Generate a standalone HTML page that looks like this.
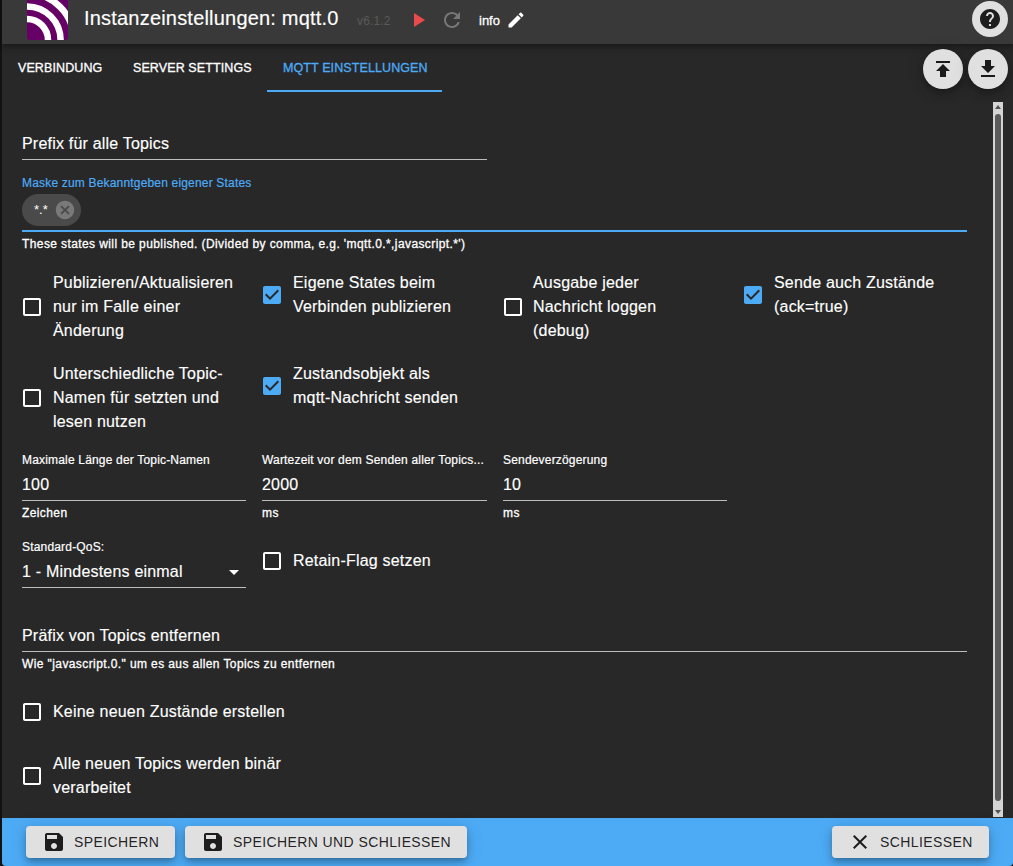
<!DOCTYPE html>
<html><head><meta charset="utf-8">
<style>
*{box-sizing:border-box;margin:0;padding:0}
html,body{width:1013px;height:866px;overflow:hidden;background:#121212;font-family:"Liberation Sans",sans-serif;color:#fff}
.a{position:absolute}
.t{position:absolute;white-space:nowrap;line-height:1}
#main{position:absolute;left:2px;top:0;width:1011px;height:866px;background:#282828;border-radius:0 0 4px 4px}
#hdr{position:absolute;left:2px;top:0;width:1011px;height:44px;background:#393939;box-shadow:0 2px 4px -1px rgba(0,0,0,.2),0 4px 5px 0 rgba(0,0,0,.14),0 1px 10px 0 rgba(0,0,0,.12)}
.f16{font-size:16px;letter-spacing:.2px;-webkit-text-stroke:.15px}
.f12{font-size:12px;letter-spacing:.18px;-webkit-text-stroke:.2px}
.b{font-weight:400;letter-spacing:.4px;-webkit-text-stroke:.3px}
.ul{position:absolute;height:1px;background:#bdbdbd}
.cb{position:absolute;width:24px;height:24px}
.tab{font-size:12.5px;font-weight:400;letter-spacing:.1px;-webkit-text-stroke:.3px}
.fab{position:absolute;width:40px;height:40px;border-radius:50%;background:#e0e0e0;box-shadow:0 3px 5px -1px rgba(0,0,0,.2),0 6px 10px 0 rgba(0,0,0,.14),0 1px 18px 0 rgba(0,0,0,.12)}
.btn{position:absolute;top:826px;height:32px;border-radius:4px;background:#e0e0e0;box-shadow:0 3px 5px -1px rgba(0,0,0,.2),0 6px 10px 0 rgba(0,0,0,.14),0 1px 18px 0 rgba(0,0,0,.12);color:rgba(0,0,0,.87)}
.btn svg{position:absolute;left:16px;top:4px;width:24px;height:24px}
.btn span{position:absolute;left:48px;top:9px;font-size:14px;line-height:14px;letter-spacing:.4px;white-space:nowrap}
</style></head><body>
<div id="main"></div>
<div id="hdr"></div>
<!-- logo -->
<svg class="a" style="left:27px;top:-1px" width="41" height="41" viewBox="0 0 41 41">
<defs><clipPath id="lc"><rect x="0" y="-5" width="41" height="46" rx="3"/></clipPath></defs>
<g clip-path="url(#lc)">
<rect x="0" y="-5" width="41" height="46" fill="#660066"/>
<g fill="none" stroke="#fff" stroke-width="6.5">
<circle cx="0" cy="41" r="21"/>
<circle cx="0" cy="41" r="33.6"/>
<circle cx="0" cy="41" r="46.8"/>
</g></g></svg>
<div class="t" style="left:84px;top:8px;font-size:20px;letter-spacing:.2px;-webkit-text-stroke:.15px">Instanzeinstellungen: mqtt.0</div>
<div class="t" style="left:357px;top:15px;font-size:12px;letter-spacing:.15px;color:#5a5a5a">v6.1.2</div>
<svg class="a" style="left:406px;top:8px" width="24" height="24" viewBox="0 0 24 24"><path fill="#e84b4b" d="M8 5v14l11-7z"/></svg>
<svg class="a" style="left:440px;top:8px" width="24" height="24" viewBox="0 0 24 24"><path fill="#777" d="M17.65 6.35C16.2 4.9 14.21 4 12 4c-4.42 0-7.99 3.58-7.99 8s3.57 8 7.99 8c3.73 0 6.84-2.55 7.73-6h-2.08c-.82 2.33-3.04 4-5.65 4-3.31 0-6-2.69-6-6s2.69-6 6-6c1.66 0 3.14.69 4.22 1.78L13 11h7V4l-2.35 2.35z"/></svg>
<div class="t" style="left:479px;top:14px;font-size:13px;letter-spacing:0;-webkit-text-stroke:.3px">info</div>
<svg class="a" style="left:506px;top:10px" width="20" height="20" viewBox="0 0 24 24"><path fill="#fff" d="M3 17.25V21h3.75L17.81 9.94l-3.75-3.75L3 17.25zM20.71 7.04c.39-.39.39-1.02 0-1.41l-2.34-2.34c-.39-.39-1.02-.39-1.41 0l-1.83 1.83 3.75 3.75 1.83-1.83z"/></svg>
<div class="a" style="left:972px;top:1px;width:36px;height:36px;border-radius:50%;background:#e0e0e0"></div>
<svg class="a" style="left:978px;top:7px" width="24" height="24" viewBox="0 0 24 24"><path fill="#1e1e1e" d="M12 2C6.48 2 2 6.48 2 12s4.48 10 10 10 10-4.48 10-10S17.52 2 12 2zm1 17h-2v-2h2v2zm2.07-7.75l-.9.92C13.45 12.9 13 13.5 13 15h-2v-.5c0-1.1.45-2.1 1.17-2.83l1.24-1.26c.37-.36.59-.86.59-1.41 0-1.1-.9-2-2-2s-2 .9-2 2H8c0-2.21 1.79-4 4-4s4 1.79 4 4c0 .88-.36 1.68-.93 2.25z"/></svg>

<!-- tabs -->
<div class="t tab" style="left:18px;top:62px">VERBINDUNG</div>
<div class="t tab" style="left:133px;top:62px">SERVER SETTINGS</div>
<div class="t tab" style="left:283px;top:62px;color:#4dabf5">MQTT EINSTELLUNGEN</div>
<div class="a" style="left:267px;top:90px;width:175px;height:2px;background:#4dabf5"></div>

<div class="fab" style="left:923px;top:49px"><svg class="a" style="left:8px;top:8px" width="24" height="24" viewBox="0 0 24 24"><path fill="#1a1a1a" d="M5 4v2h14V4H5zm0 10h4v6h6v-6h4l-7-7-7 7z"/></svg></div>
<div class="fab" style="left:968px;top:49px"><svg class="a" style="left:8px;top:8px" width="24" height="24" viewBox="0 0 24 24"><path fill="#1a1a1a" d="M19 9h-4V3H9v6H5l7 7 7-7zM5 18v2h14v-2H5z"/></svg></div>

<!-- scrollbar -->
<div class="a" style="left:993px;top:102px;width:10px;height:715px;background:#d4d4d4"></div>
<div class="a" style="left:995px;top:114px;width:6px;height:687px;border-radius:3px;background:#5a5a5a"></div>
<svg class="a" style="left:993px;top:102px" width="10" height="10" viewBox="0 0 10 10"><path fill="#505050" d="M2 7h6L5 3z"/></svg>
<svg class="a" style="left:993px;top:807px" width="10" height="10" viewBox="0 0 10 10"><path fill="#505050" d="M2 3h6L5 7z"/></svg>

<!-- content -->
<div class="t f16" style="left:22px;top:136px">Prefix für alle Topics</div>
<div class="ul" style="left:22px;top:159px;width:465px"></div>
<div class="t f12" style="left:22px;top:177px;color:#4dabf5">Maske zum Bekanntgeben eigener States</div>
<div class="a" style="left:22px;top:194px;width:59px;height:32px;border-radius:16px;background:#4a4a4a"></div>
<div class="t" style="left:34px;top:203px;font-size:13px">*.*</div>
<svg class="a" style="left:54px;top:199px" width="22" height="22" viewBox="0 0 24 24"><path fill="#797979" d="M12 2C6.47 2 2 6.47 2 12s4.47 10 10 10 10-4.47 10-10S17.53 2 12 2zm5 13.59L15.59 17 12 13.41 8.41 17 7 15.59 10.59 12 7 8.41 8.41 7 12 10.59 15.59 7 17 8.41 13.41 12 17 15.59z"/></svg>
<div class="a" style="left:22px;top:230px;width:945px;height:2px;background:#4dabf5"></div>
<div class="t f12 b" style="left:22px;top:238px">These states will be published. (Divided by comma, e.g. 'mqtt.0.*,javascript.*')</div>

<!-- checkbox row 1 -->
<svg class="cb" style="left:20px;top:295px" viewBox="0 0 24 24"><path fill="#fff" d="M19 5v14H5V5h14m0-2H5c-1.1 0-2 .9-2 2v14c0 1.1.9 2 2 2h14c1.1 0 2-.9 2-2V5c0-1.1-.9-2-2-2z"/></svg>
<div class="t f16" style="left:53px;top:271px;line-height:24px">Publizieren/Aktualisieren<br>nur im Falle einer<br>Änderung</div>
<svg class="cb" style="left:260px;top:283px" viewBox="0 0 24 24"><path fill="#4dabf5" d="M19 3H5c-1.11 0-2 .9-2 2v14c0 1.1.89 2 2 2h14c1.11 0 2-.9 2-2V5c0-1.1-.89-2-2-2zm-9 14l-5-5 1.41-1.41L10 14.17l7.59-7.59L19 8l-9 9z"/></svg>
<div class="t f16" style="left:293px;top:271px;line-height:24px">Eigene States beim<br>Verbinden publizieren</div>
<svg class="cb" style="left:501px;top:295px" viewBox="0 0 24 24"><path fill="#fff" d="M19 5v14H5V5h14m0-2H5c-1.1 0-2 .9-2 2v14c0 1.1.9 2 2 2h14c1.1 0 2-.9 2-2V5c0-1.1-.9-2-2-2z"/></svg>
<div class="t f16" style="left:533px;top:271px;line-height:24px">Ausgabe jeder<br>Nachricht loggen<br>(debug)</div>
<svg class="cb" style="left:741px;top:283px" viewBox="0 0 24 24"><path fill="#4dabf5" d="M19 3H5c-1.11 0-2 .9-2 2v14c0 1.1.89 2 2 2h14c1.11 0 2-.9 2-2V5c0-1.1-.89-2-2-2zm-9 14l-5-5 1.41-1.41L10 14.17l7.59-7.59L19 8l-9 9z"/></svg>
<div class="t f16" style="left:774px;top:271px;line-height:24px">Sende auch Zustände<br>(ack=true)</div>

<!-- checkbox row 2 -->
<svg class="cb" style="left:20px;top:386px" viewBox="0 0 24 24"><path fill="#fff" d="M19 5v14H5V5h14m0-2H5c-1.1 0-2 .9-2 2v14c0 1.1.9 2 2 2h14c1.1 0 2-.9 2-2V5c0-1.1-.9-2-2-2z"/></svg>
<div class="t f16" style="left:53px;top:362px;line-height:24px">Unterschiedliche Topic-<br>Namen für setzten und<br>lesen nutzen</div>
<svg class="cb" style="left:260px;top:374px" viewBox="0 0 24 24"><path fill="#4dabf5" d="M19 3H5c-1.11 0-2 .9-2 2v14c0 1.1.89 2 2 2h14c1.11 0 2-.9 2-2V5c0-1.1-.89-2-2-2zm-9 14l-5-5 1.41-1.41L10 14.17l7.59-7.59L19 8l-9 9z"/></svg>
<div class="t f16" style="left:293px;top:362px;line-height:24px">Zustandsobjekt als<br>mqtt-Nachricht senden</div>

<!-- number fields -->
<div class="t f12" style="left:22px;top:454px">Maximale Länge der Topic-Namen</div>
<div class="t f16" style="left:22px;top:477px">100</div>
<div class="ul" style="left:22px;top:500px;width:224px"></div>
<div class="t f12 b" style="left:22px;top:507px">Zeichen</div>

<div class="t f12" style="left:262px;top:454px">Wartezeit vor dem Senden aller Topics...</div>
<div class="t f16" style="left:262px;top:477px">2000</div>
<div class="ul" style="left:262px;top:500px;width:225px"></div>
<div class="t f12 b" style="left:262px;top:507px">ms</div>

<div class="t f12" style="left:503px;top:454px">Sendeverzögerung</div>
<div class="t f16" style="left:503px;top:477px">10</div>
<div class="ul" style="left:503px;top:500px;width:224px"></div>
<div class="t f12 b" style="left:503px;top:507px">ms</div>

<!-- QoS -->
<div class="t f12" style="left:22px;top:541px">Standard-QoS:</div>
<div class="t f16" style="left:22px;top:564px">1 - Mindestens einmal</div>
<svg class="a" style="left:222px;top:560px" width="24" height="24" viewBox="0 0 24 24"><path fill="#fff" d="M7 10l5 5 5-5z"/></svg>
<div class="ul" style="left:22px;top:587px;width:224px"></div>
<svg class="cb" style="left:260px;top:549px" viewBox="0 0 24 24"><path fill="#fff" d="M19 5v14H5V5h14m0-2H5c-1.1 0-2 .9-2 2v14c0 1.1.9 2 2 2h14c1.1 0 2-.9 2-2V5c0-1.1-.9-2-2-2z"/></svg>
<div class="t f16" style="left:293px;top:553px">Retain-Flag setzen</div>

<!-- Präfix -->
<div class="t f16" style="left:22px;top:628px">Präfix von Topics entfernen</div>
<div class="ul" style="left:22px;top:651px;width:945px"></div>
<div class="t f12 b" style="left:22px;top:658px">Wie "javascript.0." um es aus allen Topics zu entfernen</div>

<svg class="cb" style="left:20px;top:700px" viewBox="0 0 24 24"><path fill="#fff" d="M19 5v14H5V5h14m0-2H5c-1.1 0-2 .9-2 2v14c0 1.1.9 2 2 2h14c1.1 0 2-.9 2-2V5c0-1.1-.9-2-2-2z"/></svg>
<div class="t f16" style="left:53px;top:704px">Keine neuen Zustände erstellen</div>
<svg class="cb" style="left:20px;top:764px" viewBox="0 0 24 24"><path fill="#fff" d="M19 5v14H5V5h14m0-2H5c-1.1 0-2 .9-2 2v14c0 1.1.9 2 2 2h14c1.1 0 2-.9 2-2V5c0-1.1-.9-2-2-2z"/></svg>
<div class="t f16" style="left:53px;top:752px;line-height:24px">Alle neuen Topics werden binär<br>verarbeitet</div>

<!-- bottom bar -->
<div class="a" style="left:2px;top:818px;width:1011px;height:48px;background:#4dabf5;border-radius:0 0 4px 4px"></div>
<div class="btn" style="left:26px;width:149px"><svg viewBox="0 0 24 24"><path fill="#000" fill-opacity=".87" d="M17 3H5c-1.11 0-2 .9-2 2v14c0 1.1.89 2 2 2h14c1.1 0 2-.9 2-2V7l-4-4zm-5 16c-1.66 0-3-1.34-3-3s1.34-3 3-3 3 1.34 3 3-1.34 3-3 3zm3-10H5V5h10v4z"/></svg><span>SPEICHERN</span></div>
<div class="btn" style="left:185px;width:282px"><svg viewBox="0 0 24 24"><path fill="#000" fill-opacity=".87" d="M17 3H5c-1.11 0-2 .9-2 2v14c0 1.1.89 2 2 2h14c1.1 0 2-.9 2-2V7l-4-4zm-5 16c-1.66 0-3-1.34-3-3s1.34-3 3-3 3 1.34 3 3-1.34 3-3 3zm3-10H5V5h10v4z"/></svg><span>SPEICHERN UND SCHLIESSEN</span></div>
<div class="btn" style="left:832px;width:157px"><svg viewBox="0 0 24 24"><path fill="#000" fill-opacity=".87" d="M19 6.41L17.59 5 12 10.59 6.41 5 5 6.41 10.59 12 5 17.59 6.41 19 12 13.41 17.59 19 19 17.59 13.41 12z"/></svg><span>SCHLIESSEN</span></div>
</body></html>
